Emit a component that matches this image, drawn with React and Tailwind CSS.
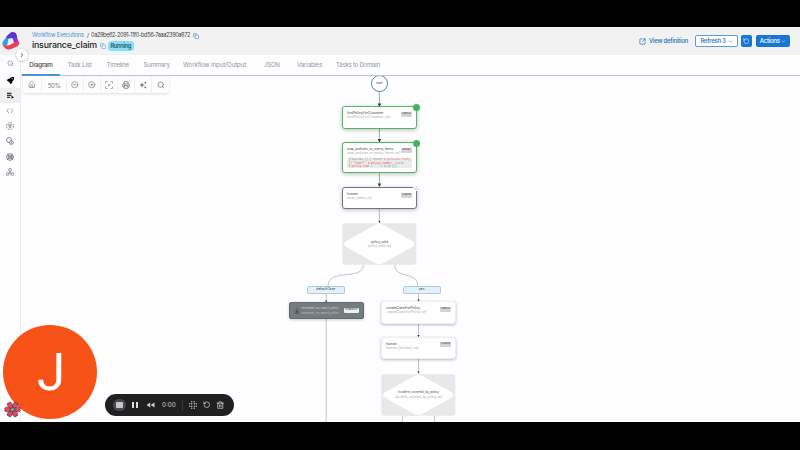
import React from "react";
import {
  Search, House, CircleMinus, CirclePlus, Printer, ChevronRight, ChevronDown,
  Copy, SquareArrowOutUpRight, RotateCcw, Code, LifeBuoy, Trash2,
  ArrowDownToLine, Loader,
} from "lucide-react";
import { FaRocket } from "react-icons/fa";

const tabs = [
  ["Task List", "w-[39px] tracking-[-0.17px]"],
  ["Timeline", "w-[37px] tracking-[-0.3px]"],
  ["Summary", "w-[39.5px] tracking-[-0.22px]"],
  ["Workflow Input/Output", "w-[81px] tracking-[-0.16px]"],
  ["JSON", "w-[33px] tracking-[-0.3px]"],
  ["Variables", "w-[39px] tracking-[-0.18px]"],
  ["Tasks to Domain", "w-[60px] tracking-[-0.3px]"],
];

function Header() {
  return (
    <header className="flex h-7 shrink-0 items-start bg-[#f2f2f2]">
      <div className="flex w-8 justify-start pl-[2px] pt-[5px]">
        <svg width="18" height="18" viewBox="0 0 18 18">
          <path d="M9 .5 5 4C3 7 1.2 8.5.4 10.8 0 12.4.6 13.2 1.6 14L5.2 13.4 6.4 6.5Z" fill="#2e9cf0" />
          <path d="M9 .5C11-.2 13.4.4 14.2 2L16.6 10.5 12.4 11.4 10.4 6 5.2 6.4 4.6 4.4Z" fill="#8338df" />
          <path d="M9 .5C11-.2 13.4.4 14.2 2L15 5.4 10.4 6 5.2 6.4 4.6 4.4Z" fill="#5b35d5" />
          <path d="M.8 13.2C4 14 8 13.6 10.8 11.3L16.4 8.8C18 10.7 17.3 13 15.6 14.2L10 16.8C6 18.4 2.5 17 .8 13.2Z" fill="#ee4254" />
        </svg>
      </div>
      <div className="flex flex-col pt-[4px]">
        <div className="flex h-[9px] items-center text-[5.6px] leading-none text-[#444]">
          <span className="w-[55px] whitespace-nowrap tracking-[-0.2px] text-[#4d92d6]">Workflow Executions</span>
          <span className="w-[4px]">/</span>
          <span className="w-[101.5px] whitespace-nowrap tracking-[-0.39px]">0a29be62-2091-11f0-bd56-7aaa2390a872</span>
          <Copy className="size-[6px] text-[#2f7fc9]" strokeWidth={2} />
        </div>
        <div className="flex h-[11px] items-center">
          <h1 className="w-[68px] text-[8.8px] font-medium leading-none tracking-[-0.2px] text-[#1c1c1c]">insurance_claim</h1>
          <Copy className="size-[6px] text-[#4f91d1]" />
          <span className="ml-[2px] flex h-[10px] w-[25.5px] items-center justify-center rounded-[3.5px] bg-[#86e1f7] text-[5.8px] font-medium leading-none tracking-[-0.3px] text-[#174450]">Running</span>
        </div>
      </div>
      <div className="ml-auto mr-[10px] flex h-full items-center text-[6.1px] font-medium leading-none text-[#2470bb]">
        <SquareArrowOutUpRight className="mr-[3px] size-[7px]" strokeWidth={2.4} />
        <span className="w-[46px] whitespace-nowrap tracking-[-0.3px]">View definition</span>
        <button className="flex h-[12px] w-[43px] items-center justify-center gap-[2px] rounded-[2px] border border-[#5e9bd6] bg-white tracking-[-0.32px]">Refresh 3<ChevronDown className="size-[5px]" strokeWidth={2.5} /></button>
        <button className="ml-[3px] flex h-[12px] w-[11px] items-center justify-center rounded-[2px] bg-[#1976d2] text-white"><RotateCcw className="size-[6.5px]" /></button>
        <button className="ml-[3.5px] flex h-[12px] w-[34.5px] items-center justify-center rounded-[2px] bg-[#1976d2] tracking-[-0.3px] text-white">Actions<ChevronDown className="ml-[1px] size-[5px]" strokeWidth={2.5} /></button>
      </div>
    </header>
  );
}

function Sidebar() {
  return (
    <nav className="relative flex w-[21px] shrink-0 flex-col items-center border-r border-[#ededf0] text-[#666]">
      <div className="flex h-[17px] w-full items-center justify-center"><Search className="size-[7px] text-[#777]" /></div>
      <div className="flex h-[16px] items-center"><FaRocket className="size-[7px] text-black" /></div>
      <div className="flex h-[15px] w-full items-center justify-center bg-[#efeff0]">
        <svg className="size-[7px]" viewBox="0 0 14 14" fill="black"><path d="M0 1.5H9V3.5H0zM0 5.5H9V7.5H0zM0 9.5H6V11.5H0zM9 7.5 14 10.5 9 13.5z" /></svg>
      </div>
      <div className="flex h-[15px] items-center"><Code className="size-[7.5px]" /></div>
      <div className="flex h-[15px] items-center">
        <svg className="size-[8px]" viewBox="0 0 16 16" fill="none" stroke="currentColor" strokeWidth="1.4">
          <circle cx="8" cy="8" r="6.8" strokeDasharray="3.6 1.7" /><path d="M4.5 5.5H11.5M6 7.5V9L8 12 10 9V7.5Z" />
        </svg>
      </div>
      <div className="flex h-[16px] items-center">
        <svg className="size-[8px]" viewBox="0 0 16 16" fill="none" stroke="currentColor" strokeWidth="1.5">
          <circle cx="6" cy="6" r="5" /><path d="M8.5 7.5H12.5L15 11 12.5 14.5H8.5L6.5 11Z" fill="white" /><circle cx="10.7" cy="11" r="1" />
        </svg>
      </div>
      <div className="flex h-[15px] items-center"><LifeBuoy className="size-[8px]" strokeWidth={2.5} /></div>
      <div className="flex h-[15px] items-center">
        <svg className="size-[8px]" viewBox="0 0 16 16" fill="none" stroke="currentColor" strokeWidth="1.4">
          <rect x="5.5" y="1" width="5" height="5" rx="1.5" /><rect x="1" y="9.5" width="5" height="5" rx="1.5" /><rect x="10" y="9.5" width="5" height="5" rx="1.5" /><path d="M8 6V9M8 9 5 11M8 9 11 11" />
        </svg>
      </div>
      <div className="absolute left-[15.5px] top-[-6px] z-20 flex size-[12px] items-center justify-center rounded-full bg-white shadow-[0_0.5px_2px_#0005]"><ChevronRight className="size-[6px] text-[#222]" strokeWidth={3} /></div>
      <svg className="absolute left-[4px] top-[346px] z-40" width="17" height="17" viewBox="0 0 17 17">
        <g stroke="#423743" strokeWidth=".7" fill="#f04560">
          {[0, 60, 120, 180, 240, 300].map((a) => (
            <path key={a} transform={`rotate(${a + 30} 8.5 8.5)`} d="M8.5 8.5C5.4 5 5.8 .6 7.8 .6L8.5 1.6 9.2 .6C11.2 .6 11.6 5 8.5 8.5Z" />
          ))}
        </g>
        <g fill="none" stroke="#345a56" strokeWidth=".45">
          <ellipse cx="8.5" cy="8.5" rx="2.9" ry="1.2" />
          <ellipse cx="8.5" cy="8.5" rx="2.9" ry="1.2" transform="rotate(60 8.5 8.5)" />
          <ellipse cx="8.5" cy="8.5" rx="2.9" ry="1.2" transform="rotate(120 8.5 8.5)" />
        </g>
        <circle cx="8.5" cy="8.5" r="1.5" fill="#60bb89" />
      </svg>
    </nav>
  );
}

function Tabs() {
  return (
    <div className="flex h-[21px] shrink-0 items-stretch border-b border-[#c4c4c8] text-[6.2px] leading-none text-[#96969b]">
      <div className="relative z-10 -mb-px ml-px flex w-[38px] items-center justify-center border-b-2 border-[#4b94d7] pt-[2px] font-medium tracking-[-0.2px] text-[#444]">Diagram</div>
      <div className="ml-[7.5px] flex items-center pt-[1px]">
        {tabs.map(([t, c]) => <span key={t} className={"whitespace-nowrap " + c}>{t}</span>)}
      </div>
    </div>
  );
}

function Toolbar() {
  const cell = "flex h-full w-[17px] items-center justify-center border-r border-[#f0f0f2]";
  return (
    <div className="absolute left-[2px] top-[1px] z-10 flex h-[16px] w-[146px] items-center rounded-[2px] bg-[#fdfdfd] text-[#77777c] shadow-[0_1px_3px_#0002]">
      <div className="flex h-full w-[19px] items-center justify-center border-r border-[#f0f0f2]"><House className="size-[7.5px]" /></div>
      <div className="flex h-full w-[25px] items-center justify-center border-r border-[#f0f0f2] text-[6px] tracking-[-0.2px]">50%</div>
      <div className={cell}><CircleMinus className="size-[7.5px]" /></div>
      <div className={cell}><CirclePlus className="size-[7.5px]" /></div>
      <div className={cell}>
        <svg className="size-[8px]" viewBox="0 0 16 16" fill="none" stroke="currentColor" strokeWidth="1.2"><path d="M1 5V1H5M11 1H15V5M15 11V15H11M5 15H1V11M8 5.5V10.5M5.5 8H10.5" /></svg>
      </div>
      <div className={cell}><Printer className="size-[8px]" strokeWidth={2.5} /></div>
      <div className={cell}>
        <svg className="size-[8px]" viewBox="0 0 16 16" fill="currentColor"><path d="M6 2.5 7.6 6.4 11.5 8 7.6 9.6 6 13.5 4.4 9.6.5 8 4.4 6.4ZM12.5.5 13.4 2.6 15.5 3.5 13.4 4.4 12.5 6.5 11.6 4.4 9.5 3.5 11.6 2.6ZM12.5 9.5 13.4 11.6 15.5 12.5 13.4 13.4 12.5 15.5 11.6 13.4 9.5 12.5 11.6 11.6Z" /></svg>
      </div>
      <div className="flex h-full flex-1 items-center justify-center"><Search className="size-[8px]" strokeWidth={2.3} /></div>
    </div>
  );
}

function Task({ place, tone, title, sub, tag, children }) {
  return (
    <div className={"absolute w-[75px] rounded-[3px] px-[4px] pt-[4px] " + place + " " + tone}>
      <div className="flex justify-between">
        <div className="whitespace-nowrap text-[3.4px] leading-[4.4px]">
          <div className="text-[#444]">{title}</div>
          <div className="italic text-[#aaa]">{sub}</div>
        </div>
        <span className="-ml-4 mt-[0.5px] flex h-[5px] w-[11px] shrink-0 items-center justify-center rounded-[1px] bg-[#d3d3d4] text-[2.4px] font-semibold leading-none text-[#666]">{tag}</span>
      </div>
      {children}
    </div>
  );
}

function Decision({ place, title, sub }) {
  return (
    <div className={"absolute h-[42px] w-[75px] " + place}>
      <svg className="absolute inset-0" width="75" height="42" viewBox="0 0 75 42">
        <rect x=".3" y=".3" width="74" height="41.4" rx="3" fill="#e8e8e9" />
        <path d="M33 2Q37.2-.2 41.4 2L70.5 18.2Q74.5 21 70.5 23.8L41.4 40Q37.2 42.2 33 40L4 23.8Q0 21 4 18.2Z" fill="white" />
      </svg>
      <div className="relative flex h-full flex-col items-center justify-center whitespace-nowrap text-[3.3px] leading-[4.3px] tracking-[-0.05px]">
        <div className="text-[#555]">{title}</div>
        <div className="italic text-[#aaa]">{sub}</div>
      </div>
    </div>
  );
}

const green = "border-[1.5px] border-[#55b765] bg-white shadow-[0_1px_4px_#0004]";
const plain = "border border-[#eeeef0] bg-white shadow-[0_1px_3px_#0004]";

function Diagram() {
  return (
    <main className="relative min-h-0 flex-1 overflow-hidden bg-[#fefdff]">
      <svg className="absolute left-0 top-0" width="779" height="346" viewBox="21 76 779 346" fill="none">
        <g stroke="#6dbb79" strokeWidth=".9">
          <path d="M379.4 91V105M379.4 128V141M379.4 172V185" />
        </g>
        <g stroke="#b2b2b6" strokeWidth=".8">
          <path d="M379.4 208V222M363.3 265C363.3 281 328 268 328 286M395 265C395 280 417.5 270 417.5 286M326.2 294V302M326.2 319V422M418.5 294V301M418.5 323V336M418.5 359V373M403 415 402 422M434 415 435 422" />
        </g>
        <g fill="#333b3d">
          <path d="M377.7 103.5h3.5l-1.75 3.5zM377.7 139h3.5l-1.75 3.5zM377.7 183.5h3.5l-1.75 3.5z" />
          <path d="M378.3 220.8h2.2l-1.1 2.4zM325.1 300.5h2.2l-1.1 2.2zM417.4 299.5h2.2l-1.1 2.2zM417.4 335h2.2l-1.1 2.2zM417.4 371.5h2.2l-1.1 2.2z" />
        </g>
        <path d="M556 82V98" stroke="#ddd" strokeWidth=".6" strokeDasharray="1 6" />
      </svg>
      <div className="absolute left-[350px] top-[-1px] flex size-[17px] items-center justify-center rounded-full border-[1.3px] border-[#55848c] bg-white text-[3.2px] leading-none text-[#333]">start</div>

      <Task place="left-[321px] top-[30px] h-[22.5px]" tone={green} title="findPolicyForCustomer" sub="findPolicyForCustomer_ref" tag="SIMPLE" />
      <Task place="left-[321px] top-[66px] h-[31px]" tone={green} title="map_policies_to_menu_items" sub="map_policies_to_menu_items_ref" tag="INLINE">
        <div className="mt-[2px] h-[10.5px] whitespace-nowrap rounded-[1px] bg-[#ebebec] px-[1.5px] pt-[0.5px] font-['Liberation_Mono'] text-[2.7px] leading-[3.2px] text-[#888]">
          <div>(function () {"{"} return <span className="text-[#e07070]">$.policies.reply</span></div>
          <div>({"{"} <span className="text-[#d55]">"label": $.policy_number,</span> title:</div>
          <div className="text-[#d66]">$.policy.name <span className="text-[#888]">+ ' ' + $.id {"}"}))</span></div>
        </div>
      </Task>
      <div className="absolute left-[391.5px] top-[28px] size-[7px] rounded-full bg-[#42b65a]" />
      <div className="absolute left-[391.5px] top-[64px] size-[7px] rounded-full bg-[#42b65a]" />
      <Task place="left-[321px] top-[111px] h-[22px]" tone="border border-[#77777b] bg-white shadow-[0_1px_4px_#0004]" title="human" sub="main_menu_ref" tag="HUMAN" />
      <div className="absolute left-[392px] top-[109px] flex size-[6px] items-center justify-center rounded-full bg-white"><Loader className="size-[4.5px] text-[#6b9cc4]" /></div>
      <Decision place="left-[321px] top-[147px]" title="policy_valid" sub="policy_valid_ref" />

      <div className="absolute left-[286px] top-[210px] flex h-[8px] w-[37.5px] items-center justify-center rounded-[2px] border border-[#b8c8d3] bg-[#e0f2fd] text-[3.3px] leading-none text-[#333]">defaultCase</div>
      <div className="absolute left-[382px] top-[210px] flex h-[8px] w-[37.5px] items-center justify-center rounded-[2px] border border-[#b8c8d3] bg-[#e0f2fd] text-[3.3px] leading-none text-[#333]">yes</div>

      <div className="absolute left-[268px] top-[226px] flex h-[17px] w-[75px] items-center rounded-[2px] border border-[#626c6f] bg-[#737c7f] pl-[4px] pr-[4px] shadow-[0_1px_3px_#0003]">
        <ArrowDownToLine className="size-[6px] shrink-0 text-[#333]" strokeWidth={2.5} />
        <div className="ml-[1.5px] flex-1 whitespace-nowrap text-[2.9px] leading-[4.3px] text-[#bbc1c3]">
          <div className="text-[#d1d5d6]">terminate_no_match_policy</div>
          <div className="italic">terminate_no_match_policy</div>
        </div>
        <span className="flex h-[5.5px] w-[15.5px] shrink-0 items-center justify-center rounded-[1px] bg-[#eef0f0] text-[2.2px] font-semibold leading-none text-[#555]">TERMINATE</span>
      </div>

      <Task place="left-[360px] top-[225px] h-[22.5px]" tone={plain} title="createClaimForPolicy" sub="createClaimForPolicy_ref" tag="SIMPLE" />
      <Task place="left-[360px] top-[260.5px] h-[22.5px]" tone={plain} title="human" sub="human_fileclaim_ref" tag="HUMAN" />
      <Decision place="left-[360px] top-[297.5px]" title="incident_covered_by_policy" sub="incident_covered_by_policy_ref" />
      <Toolbar />
    </main>
  );
}

function Recorder() {
  return (
    <div className="absolute left-[105px] top-[394px] z-30 flex h-[22px] w-[129px] items-center rounded-full bg-[#202021] text-[#d0d0d1]">
      <div className="ml-[8px] flex size-[12.5px] items-center justify-center rounded-full bg-[#484a4f]"><div className="size-[6.5px] rounded-[1px] bg-[#c9c6cb]" /></div>
      <div className="ml-[6px] flex h-[6.5px] w-[6px] justify-between"><i className="w-[2px] bg-[#ddd]" /><i className="w-[2px] bg-[#ddd]" /></div>
      <svg className="ml-[8px] h-[6px] w-[9px]" viewBox="0 0 18 12" fill="currentColor"><path d="M8.5 1V11L1 6ZM17 1V11L9.5 6Z" /></svg>
      <span className="ml-[7.5px] w-[20px] text-[6.3px] leading-none">0:00</span>
      <div className="h-[11px] w-px bg-[#38383a]" />
      <svg className="ml-[6px] size-[8px]" viewBox="0 0 16 16" fill="currentColor">
        {[[5.5, 1.5], [10.5, 1.5], [1.5, 5.5], [5.5, 5.5], [10.5, 5.5], [14.5, 5.5], [1.5, 10.5], [5.5, 10.5], [10.5, 10.5], [14.5, 10.5], [5.5, 14.5], [10.5, 14.5]].map(([x, y]) => <circle key={x + "-" + y} cx={x} cy={y} r="1.3" />)}
      </svg>
      <RotateCcw className="ml-[6px] size-[7.5px]" strokeWidth={2.3} />
      <Trash2 className="ml-[5.5px] size-[8.5px]" strokeWidth={2.2} />
    </div>
  );
}

export default function App() {
  return (
    <div className="relative flex h-[450px] w-[800px] flex-col overflow-hidden border-b-[28px] border-t-[27px] border-black bg-[#fefdff] font-['Inter','Open_Sans',sans-serif]">
      <Header />
      <div className="flex min-h-0 flex-1">
        <Sidebar />
        <section className="flex min-w-0 flex-1 flex-col"><Tabs /><Diagram /></section>
      </div>
      <div className="absolute left-[3px] top-[298px] z-30 flex size-[94px] items-center justify-center rounded-full bg-[#f75218]">
        <span className="pl-[2px] font-['Roboto',sans-serif] text-[51px] leading-none text-white">J</span>
      </div>
      <div className="absolute inset-x-0 top-[-27px] z-30 h-0"><Recorder /></div>
      <svg className="hidden" />
    </div>
  );
}
